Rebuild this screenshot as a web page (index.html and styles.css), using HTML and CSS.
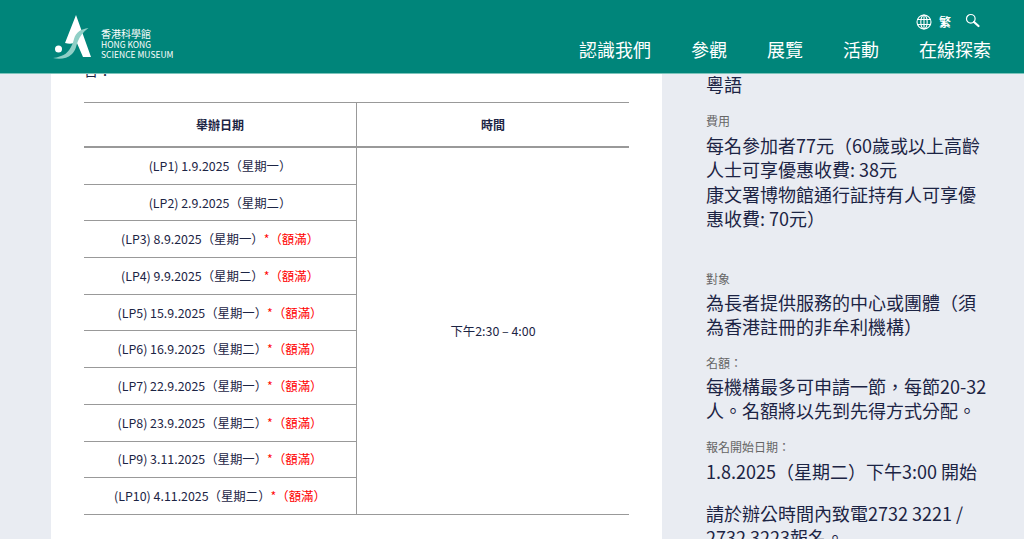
FILE: index.html
```html
<!DOCTYPE html>
<html lang="zh-Hant">
<head>
<meta charset="utf-8">
<title>香港科學館</title>
<link rel="stylesheet" href="styles.css">
</head>
<body>
<header class="site-header">
  <a class="logo" href="#">
    <svg class="logo-mark" width="56" height="46" viewBox="0 0 56 46">
      <path d="M24 0 L39 42 L31 42 L24.500 27 C21 29 17 29 13 28 Z" fill="#fff"/>
      <path d="M36.500 13 C29 14 24 17 22 24 C20 32 16 39 9 41 C6 42 3 43 1 43 C7 44.500 15 44 20 39 C24 35 24 31 26 26 C28 21 31 17 36.500 13 Z" fill="#8fcfc6"/>
      <circle cx="6.500" cy="34" r="3.500" fill="#fff"/>
    </svg>
    <span class="logo-text">
      <span class="logo-zh">香港科學館</span>
      <span class="logo-en">HONG KONG</span>
      <span class="logo-en">SCIENCE MUSEUM</span>
    </span>
  </a>
  <div class="header-right">
    <div class="tools">
      <svg class="globe" width="16" height="16" viewBox="0 0 16 16" fill="none" stroke="#fff" stroke-width="1.1">
        <circle cx="8" cy="8" r="7"/>
        <ellipse cx="8" cy="8" rx="3.2" ry="7"/>
        <path d="M8 1v14M1.4 5.5h13.2M1.4 10.500h13.200"/>
      </svg>
      <span class="lang">繁</span>
      <svg class="search" width="15" height="15" viewBox="0 0 15 15" fill="none" stroke="#fff">
        <circle cx="5.800" cy="5.800" r="4.300" stroke-width="1.200"/>
        <path d="M9 9l4.500 4" stroke-width="2.200" stroke-linecap="round"/>
      </svg>
    </div>
    <nav class="nav">
      <a href="#">認識我們</a>
      <a href="#">參觀</a>
      <a href="#">展覽</a>
      <a href="#">活動</a>
      <a href="#">在線探索</a>
    </nav>
  </div>
</header>
<div class="page">
  <main class="content">
    <p class="clipped">日：</p>
    <table class="schedule">
      <thead>
        <tr><th class="col-date">舉辦日期</th><th>時間</th></tr>
      </thead>
      <tbody>
        <tr><td>(LP1) 1.9.2025（星期一）</td><td class="time" rowspan="10">下午2:30 – 4:00</td></tr>
        <tr><td>(LP2) 2.9.2025（星期二）</td></tr>
        <tr><td>(LP3) 8.9.2025（星期一）<span class="full">*（額滿）</span></td></tr>
        <tr><td>(LP4) 9.9.2025（星期二）<span class="full">*（額滿）</span></td></tr>
        <tr><td>(LP5) 15.9.2025（星期一）<span class="full">*（額滿）</span></td></tr>
        <tr><td>(LP6) 16.9.2025（星期二）<span class="full">*（額滿）</span></td></tr>
        <tr><td>(LP7) 22.9.2025（星期一）<span class="full">*（額滿）</span></td></tr>
        <tr><td>(LP8) 23.9.2025（星期二）<span class="full">*（額滿）</span></td></tr>
        <tr><td>(LP9) 3.11.2025（星期一）<span class="full">*（額滿）</span></td></tr>
        <tr><td>(LP10) 4.11.2025（星期二）<span class="full">*（額滿）</span></td></tr>
      </tbody>
    </table>
  </main>
  <aside class="side">
    <p class="value first">粵語</p>
    <p class="label fee-label">費用</p>
    <p class="value fee">每名參加者77元（60歲或以上高齡人士可享優惠收費: 38元<br>康文署博物館通行証持有人可享優惠收費: 70元）</p>
    <p class="label target">對象</p>
    <p class="value">為長者提供服務的中心或團體（須為香港註冊的非牟利機構）</p>
    <p class="label">名額：</p>
    <p class="value">每機構最多可申請一節，每節20-32人。名額將以先到先得方式分配。</p>
    <p class="label date-label">報名開始日期：</p>
    <p class="value">1.8.2025（星期二）下午3:00 開始</p>
    <p class="value phone">請於辦公時間內致電2732 3221 / 2732 3223報名。</p>
  </aside>
</div>
</body>
</html>
```
FILE: styles.css
```css
* { box-sizing: border-box; }
html, body { margin: 0; height: 539px; overflow: hidden; }
body {
  background: #e9ecf2;
  color: #1c2444;
  font-family: "Noto Sans CJK TC", "Noto Sans", sans-serif;
  display: flex;
  flex-direction: column;
}
.site-header {
  flex: none;
  height: 74px;
  background: #00857a;
  border-bottom: 1px solid #7cc4bb;
  display: flex;
  justify-content: space-between;
  padding: 0 33px 0 52px;
  color: #fff;
}
.logo { display: flex; align-items: flex-start; color: #fff; text-decoration: none; }
.logo-mark { margin-top: 15px; }
.logo-text { display: flex; flex-direction: column; margin: 28px 0 0 -7px; }
.logo-zh { font-size: 10px; line-height: 12px; }
.logo-en { font-size: 8.500px; line-height: 9.500px; }
.header-right { display: flex; flex-direction: column; align-items: flex-end; }
.tools { display: flex; align-items: center; height: 16px; margin: 14px 11px 0 0; }
.lang { font-size: 12px; line-height: 16px; font-weight: 700; margin-left: 7px; }
.search { margin: -4px 0 0 14px; }
.nav { display: flex; gap: 40px; margin-top: 7px; }
.nav a { color: #fff; text-decoration: none; font-size: 18px; line-height: 24px; }
.page { flex: 1; min-height: 0; display: flex; overflow: hidden; }
.content {
  width: 611px;
  margin-left: 51px;
  padding: 0 33px 0 33px;
  background: #fff;
}
.clipped { margin: -14px 0 0; font-size: 14px; line-height: 20px; height: 20px; }
.schedule {
  width: 545px;
  margin-top: 22px;
  border-collapse: collapse;
  table-layout: fixed;
  font-size: 12.400px;
}
.schedule th {
  height: 44px;
  font-weight: 700;
  font-size: 12px;
  border-top: 1px solid #999;
  border-bottom: 2px solid #999;
}
.schedule td {
  height: 36.700px;
  padding: 0;
  text-align: center;
  border-bottom: 1px solid #999;
}
.schedule tbody tr:first-child td { height: 37.700px; }
.col-date { width: 272.500px; border-right: 1px solid #999; }
.time { border-left: 1px solid #999; }
.full { color: #f00; }
.side { flex: 1; padding: 0 36px 0 44px; }
.side p { margin: 0; }
.value { font-size: 18px; line-height: 24.300px; }
.side .first { line-height: 21px; }
.side .label { font-size: 12px; line-height: 18px; color: #666; margin-top: 15px; margin-bottom: 2px; }
.side .fee-label { margin-top: 17px; margin-bottom: 3px; }
.side .target { margin-top: 40px; }
.side .date-label { margin-top: 16px; margin-bottom: 3px; }
.side .phone { margin-top: 17px; }
```
